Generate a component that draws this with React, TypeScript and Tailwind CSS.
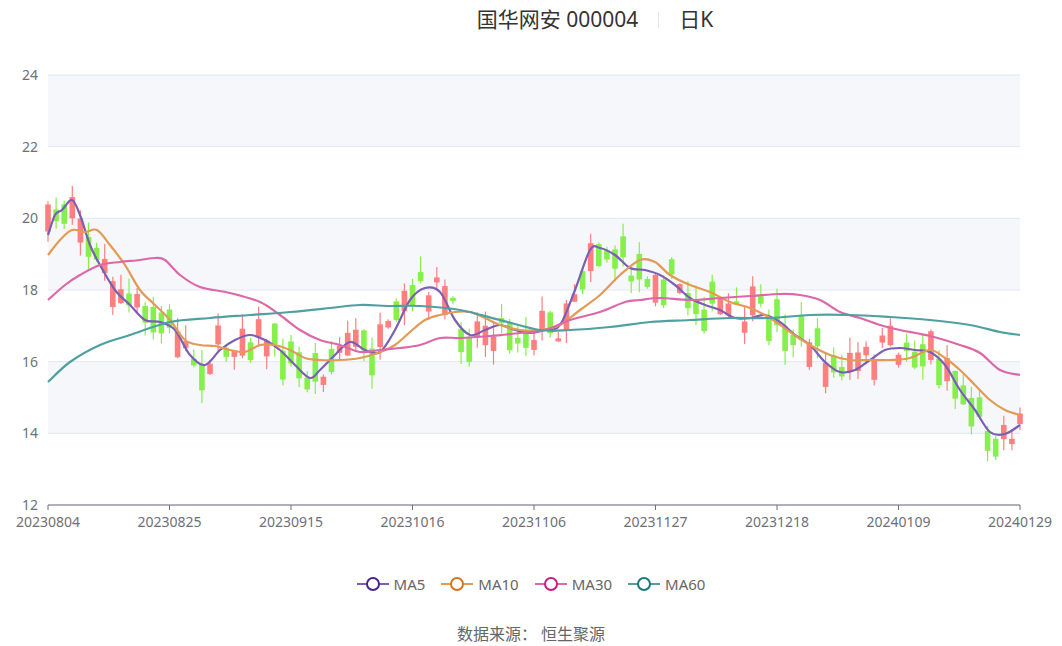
import React from "react";

type P = [number, number];

const ma5: P[] = [[48,235],[55,215],[62,210],[72,200],[80,215],[90,245],[100,265],[115,290],[130,305],[145,320],[160,322],[175,330],[190,355],[205,365],[220,350],[235,340],[250,335],[265,340],[280,350],[295,365],[310,378],[320,370],[335,355],[350,342],[365,350],[380,352],[395,330],[410,300],[425,288],[440,292],[455,320],[470,335],[485,330],[500,325],[515,330],[530,333],[545,330],[560,325],[575,290],[590,250],[600,248],[615,255],[630,268],[645,270],[660,275],[675,285],[690,298],[705,305],[720,310],[735,318],[750,318],[765,315],[780,322],[795,335],[810,345],[825,362],[840,372],[855,370],[870,360],[885,350],[900,348],[915,350],[930,352],[945,365],[960,390],[975,410],[990,432],[1005,434],[1020,425]];
const ma10: P[] = [[48,255],[60,240],[72,230],[85,232],[97,230],[110,245],[125,265],[140,290],[155,305],[170,320],[185,340],[200,345],[215,346],[230,350],[245,352],[260,345],[275,345],[290,350],[305,358],[320,360],[340,360],[360,358],[380,352],[395,345],[410,332],[425,320],[440,315],[455,312],[470,312],[485,318],[500,325],[520,330],[540,330],[560,325],[580,310],[600,295],[620,275],[640,260],[655,262],[670,275],[690,285],[710,292],[730,302],[750,308],[770,318],[790,332],[810,345],[830,355],[850,360],[870,360],[890,360],[910,358],[930,350],[945,358],[960,370],[975,385],[990,400],[1005,410],[1020,415]];
const ma30: P[] = [[48,300],[65,285],[80,275],[100,265],[120,262],[140,260],[155,258],[165,260],[180,275],[200,287],[230,293],[260,302],[280,315],[300,330],[320,340],[340,345],[360,352],[380,350],[400,348],[420,345],[440,338],[460,338],[490,336],[520,333],[545,330],[570,320],[600,312],[625,302],[640,300],[660,298],[690,300],[720,298],[750,296],[780,294],[800,295],[820,300],[840,312],[860,318],[880,325],[900,330],[930,336],[960,345],[980,353],[1000,370],[1020,375]];
const ma60: P[] = [[48,382],[70,362],[100,345],[130,335],[170,322],[210,318],[250,315],[290,312],[330,308],[360,305],[390,306],[420,306],[460,310],[500,320],[540,330],[570,330],[610,327],[650,322],[690,320],[730,318],[770,318],[810,315],[850,315],[890,317],[930,320],[970,325],[1000,332],[1020,335]];

function smooth(pts: P[]) {
  let d = `M${pts[0][0]},${pts[0][1]}`;
  for (let i = 0; i < pts.length - 1; i++) {
    const p0 = pts[Math.max(0, i - 1)], p1 = pts[i], p2 = pts[i + 1], p3 = pts[Math.min(pts.length - 1, i + 2)];
    const c1x = p1[0] + (p2[0] - p0[0]) / 6, c1y = p1[1] + (p2[1] - p0[1]) / 6;
    const c2x = p2[0] - (p3[0] - p1[0]) / 6, c2y = p2[1] - (p3[1] - p1[1]) / 6;
    d += ` C${c1x.toFixed(1)},${c1y.toFixed(1)} ${c2x.toFixed(1)},${c2y.toFixed(1)} ${p2[0]},${p2[1]}`;
  }
  return d;
}

function interp(pts: P[], x: number) {
  for (let i = 0; i < pts.length - 1; i++) {
    if (x <= pts[i + 1][0]) {
      const t = (x - pts[i][0]) / (pts[i + 1][0] - pts[i][0]);
      return pts[i][1] + t * (pts[i + 1][1] - pts[i][1]);
    }
  }
  return pts[pts.length - 1][1];
}

let seed = 7;
const rnd = () => {
  seed = (seed * 16807) % 2147483647;
  return seed / 2147483647;
};

const candles = Array.from({ length: 121 }, (_, i) => {
  const x = 48 + i * 8.1;
  const slope = interp(ma5, x + 8) - interp(ma5, x - 8);
  const c = interp(ma5, x) + (rnd() - 0.5) * 34;
  const body = 3 + rnd() * 26;
  const up = slope < 0 ? rnd() < 0.75 : rnd() < 0.3;
  const top = c - body / 2, bot = c + body / 2;
  return { x, top, bot, hi: top - rnd() * 16, lo: bot + rnd() * 14, up };
});

const yTicks = [24, 22, 20, 18, 16, 14, 12];
const py = (v: number) => 75 + (24 - v) * (430 / 12);
const dates = ["20230804", "20230825", "20230915", "20231016", "20231106", "20231127", "20231218", "20240109", "20240129"];

const lines = [
  { name: "MA5", d: ma5, line: "#7b5fb5", dot: "#4a238f" },
  { name: "MA10", d: ma10, line: "#e39a55", dot: "#d8731a" },
  { name: "MA30", d: ma30, line: "#dc68aa", dot: "#c81d83" },
  { name: "MA60", d: ma60, line: "#4fa0a0", dot: "#177b7b" },
];

export default function App() {
  return (
    <div className="w-[1062px] h-[646px] bg-white flex flex-col items-center" style={{ fontFamily: '"Noto Sans", "Noto Sans CJK SC", sans-serif' }}>
      <div className="h-[40px] flex items-center gap-5 text-[21px] text-[#333] pl-[128px]">
        <span>国华网安 000004</span>
        <span className="w-px h-[16px] bg-[#e5e5e5]" />
        <span>日K</span>
      </div>
      <svg width="1062" height="500" viewBox="0 40 1062 500" className="block">
        {[0, 2, 4].map((k) => (
          <rect key={k} x={48} y={py(24 - k * 2)} width={972} height={430 / 6} fill="#f6f7fb" />
        ))}
        {yTicks.map((v) => (
          <g key={v}>
            <line x1={48} x2={1020} y1={py(v)} y2={py(v)} stroke="#e0e6f1" />
            <text x={38} y={py(v) + 5} textAnchor="end" fontSize={14} fill="#6e7079">{v}</text>
          </g>
        ))}
        <line x1={48} x2={1020} y1={505} y2={505} stroke="#6e7079" />
        {dates.map((d, i) => {
          const x = 48 + i * 121.5;
          return (
            <g key={d}>
              <line x1={x} x2={x} y1={505} y2={510} stroke="#6e7079" />
              <text x={x} y={527} textAnchor="middle" fontSize={14} fill="#6e7079">{d}</text>
            </g>
          );
        })}
        {candles.map((c, i) => {
          const col = c.up ? "#ff7f7f" : "#86f04a";
          return (
            <g key={i}>
              <line x1={c.x} x2={c.x} y1={c.hi} y2={c.lo} stroke={col} strokeWidth={1.2} />
              <rect x={c.x - 2.8} y={c.top} width={5.6} height={c.bot - c.top} fill={col} />
            </g>
          );
        })}
        {lines.map((l) => (
          <path key={l.name} d={smooth(l.d)} fill="none" stroke={l.line} strokeWidth={2.2} />
        ))}
      </svg>
      <div className="mt-[33px] flex gap-[16px] text-[15px] text-[#666]">
        {lines.map((l) => (
          <div key={l.name} className="flex items-center gap-[5px]">
            <svg width="32" height="16">
              <line x1="0" x2="32" y1="8" y2="8" stroke={l.line} strokeWidth="2" />
              <circle cx="16" cy="8" r="6" fill="white" stroke={l.dot} strokeWidth="2" />
            </svg>
            <span>{l.name}</span>
          </div>
        ))}
      </div>
      <div className="mt-[26px] text-[16px] text-[#666]">数据来源：&nbsp;恒生聚源</div>
    </div>
  );
}
